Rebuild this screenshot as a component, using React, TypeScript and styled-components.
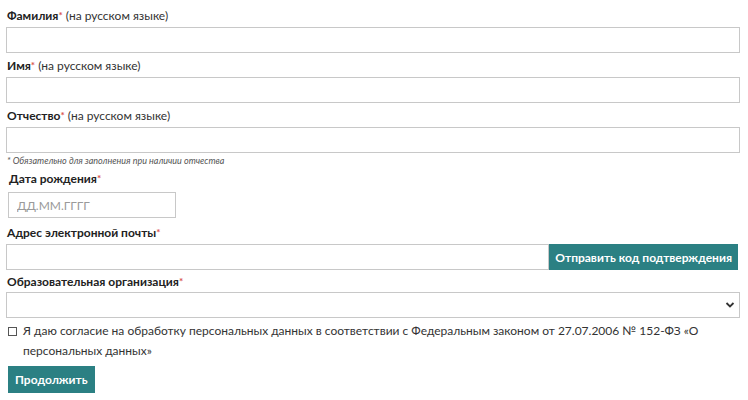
import styled, { createGlobalStyle } from 'styled-components';

const GlobalStyle = createGlobalStyle`
  body {
    margin: 0;
    background: #fff;
    font-family: Lato, "Liberation Sans", sans-serif;
    color: #333;
  }
`;

const Form = styled.form`
  width: 734px;
  padding: 6px 0 0 6px;
  display: flex;
  flex-direction: column;
`;

const Label = styled.div<{ $indent?: number; $gap?: number }>`
  font-size: 12px;
  line-height: 18px;
  height: 18px;
  margin: 0 0 ${(p) => p.$gap ?? 3}px ${(p) => p.$indent ?? 1}px;
  color: #333;
  white-space: nowrap;
`;

const Strong = styled.b`
  font-weight: 700;
  color: #222;
`;

const Star = styled.span`
  color: #d9534f;
  font-size: 10px;
  font-weight: 700;
  vertical-align: 1px;
`;

const Input = styled.input<{ $width?: number; $grow?: boolean }>`
  box-sizing: border-box;
  width: ${(p) => (p.$width ? `${p.$width}px` : '100%')};
  ${(p) => (p.$grow ? 'flex: 1; min-width: 0; margin: 0;' : 'margin: 0 0 3px;')}
  height: 26px;
  border: 1px solid #c8c8c8;
  border-radius: 0;
  padding: 0 8px;
  font-family: inherit;
  font-size: 12px;
  color: #333;
  outline: none;
  &::placeholder {
    color: #9a9a9a;
  }
`;

const DateInput = styled(Input)`
  margin-left: 2px;
  margin-bottom: 5px;
`;

const Note = styled.div`
  font-size: 9px;
  line-height: 12px;
  font-style: italic;
  color: #555;
  margin: -1px 0 2px 1px;
`;

const Row = styled.div`
  display: flex;
  margin: 0 2px 2px 0;
`;

const TealButton = styled.button`
  height: 26px;
  border: none;
  border-radius: 0;
  background: #2b8083;
  color: #fff;
  font-family: inherit;
  font-size: 12px;
  font-weight: 700;
  padding: 0 6px;
  white-space: nowrap;
  cursor: pointer;
`;

const SelectWrap = styled.div`
  position: relative;
  height: 26px;
  border: 1px solid #c8c8c8;
  box-sizing: border-box;
`;

const Chevron = styled.svg`
  position: absolute;
  right: 4px;
  top: 8px;
`;

const Consent = styled.label`
  display: flex;
  align-items: flex-start;
  font-size: 12px;
  line-height: 20px;
  color: #333;
  margin: 3px 0 5px;
`;

const Box = styled.span`
  flex: none;
  width: 7px;
  height: 7px;
  border: 1px solid #555;
  margin: 6px 6px 0 2px;
`;

const Submit = styled(TealButton)`
  align-self: flex-start;
  height: 27px;
  margin-left: 2px;
  padding: 0 7px;
`;

export default function App() {
  return (
    <>
      <GlobalStyle />
      <Form>
        <Label>
          <Strong>Фамилия</Strong>
          <Star>*</Star> (на русском языке)
        </Label>
        <Input />
        <Label>
          <Strong>Имя</Strong>
          <Star>*</Star> (на русском языке)
        </Label>
        <Input />
        <Label>
          <Strong>Отчество</Strong>
          <Star>*</Star> (на русском языке)
        </Label>
        <Input />
        <Note>* Обязательно для заполнения при наличии отчества</Note>
        <Label $indent={3} $gap={5}>
          <Strong>Дата рождения</Strong>
          <Star>*</Star>
        </Label>
        <DateInput $width={168} placeholder="ДД.ММ.ГГГГ" />
        <Label $gap={3}>
          <Strong>Адрес электронной почты</Strong>
          <Star>*</Star>
        </Label>
        <Row>
          <Input $grow />
          <TealButton type="button">Отправить код подтверждения</TealButton>
        </Row>
        <Label $gap={2}>
          <Strong>Образовательная организация</Strong>
          <Star>*</Star>
        </Label>
        <SelectWrap>
          <Chevron width="10" height="8" viewBox="0 0 10 8">
            <path d="M1.5 2 L5 5.5 L8.5 2" fill="none" stroke="#333" strokeWidth="1.8" />
          </Chevron>
        </SelectWrap>
        <Consent>
          <Box />
          <span>
            Я даю согласие на обработку персональных данных в соответствии с Федеральным законом от
            27.07.2006 № 152-ФЗ «О персональных данных»
          </span>
        </Consent>
        <Submit type="button">Продолжить</Submit>
      </Form>
    </>
  );
}
